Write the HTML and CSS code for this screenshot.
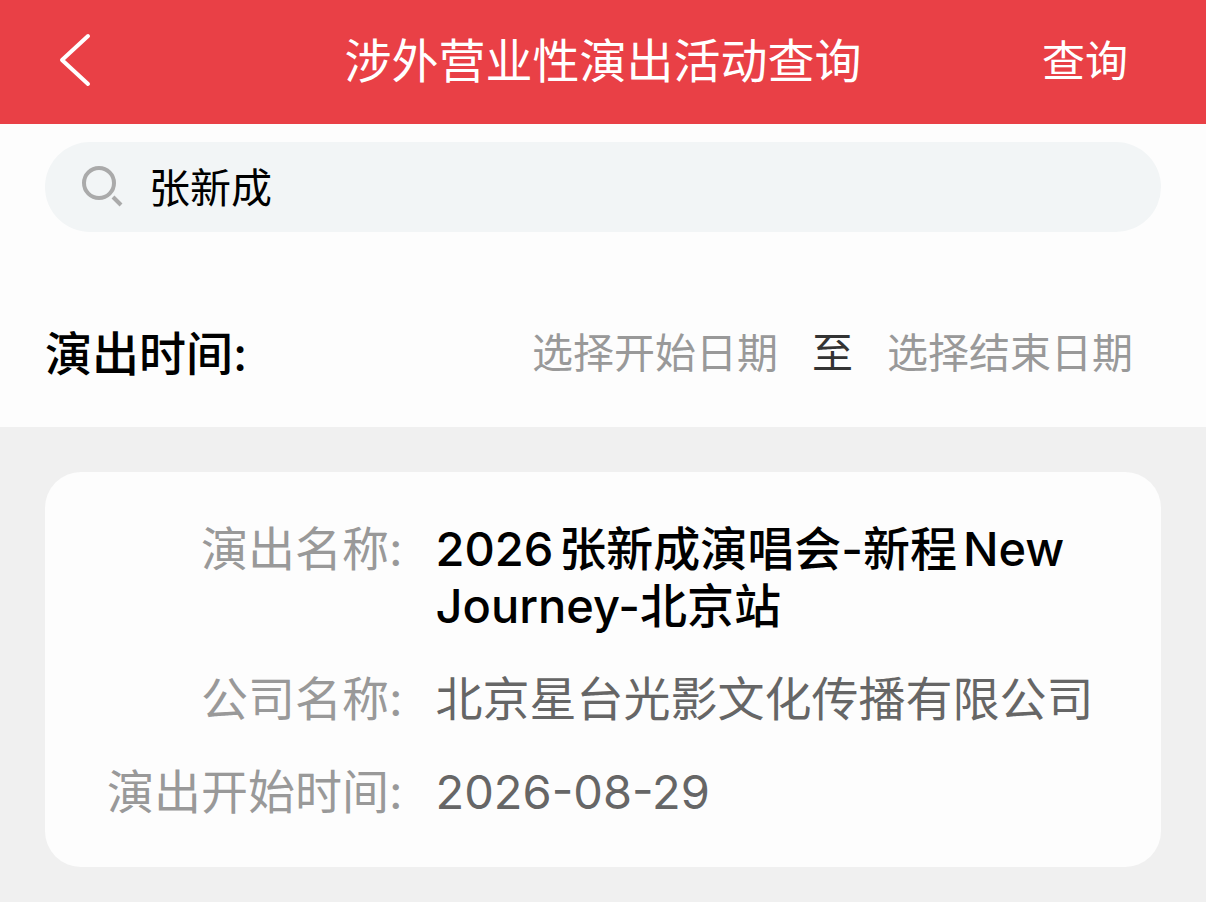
FILE: index.html
```html
<!DOCTYPE html>
<html lang="zh-CN">
<head>
    <meta charset="UTF-8">
    <meta name="viewport" content="width=device-width, initial-scale=1.0">
    <title>涉外营业性演出活动查询</title>
    <link rel="stylesheet" href="styles.css">
</head>
<body>

    <header class="navbar">
        <button type="button" class="back" aria-label="返回">
            <svg width="34" height="56" viewBox="0 0 34 56" fill="none" stroke="#fff" stroke-width="4" stroke-linecap="round" stroke-linejoin="round">
                <path d="M30 4 L4 28 L30 52"/>
            </svg>
        </button>
        <h1>涉外营业性演出活动查询</h1>
        <button type="submit" form="searchForm" class="query">查询</button>
    </header>

    <form class="filters" id="searchForm">
        <label class="search">
            <svg width="42" height="42" viewBox="0 0 42 42" fill="none" stroke="#aaa" stroke-width="4">
                <circle cx="18" cy="17" r="15"/>
                <path d="M32 31 L40 39"/>
            </svg>
            <input type="text" value="张新成" aria-label="搜索">
        </label>

        <div class="date-row" role="group" aria-labelledby="dateTitle">
            <h2 id="dateTitle">演出时间:</h2>
            <div class="dates">
                <button type="button" class="date">选择开始日期</button>
                <span>至</span>
                <button type="button" class="date">选择结束日期</button>
            </div>
        </div>
    </form>

    <main>
        <dl class="card">
            <dt>演出名称:</dt>
            <dd class="name">2026张新成演唱会-新程New Journey-北京站</dd>
            <dt>公司名称:</dt>
            <dd>北京星台光影文化传播有限公司</dd>
            <dt>演出开始时间:</dt>
            <dd>2026-08-29</dd>
        </dl>
    </main>

</body>
</html>
```
FILE: styles.css
```css
* {
    box-sizing: border-box;
}

body {
    margin: 0;
    background-color: #f0f0f0;
    color: #000;
    font-family: Inter, "Noto Sans CJK SC", sans-serif;
    font-size: 47px;
    line-height: 57px;
}

button,
input {
    padding: 0;
    border: none;
    background: none;
    color: inherit;
    font: inherit;
}

h1,
h2 {
    margin: 0;
    font-size: 47px;
}

.navbar {
    display: grid;
    grid-template-columns: 1fr auto 1fr;
    align-items: center;
    height: 124px;
    padding: 0 58px 4px;
    background-color: #e94046;
    color: #fff;
}

.navbar h1 {
    font-weight: 400;
}

.back {
    display: flex;
    justify-self: start;
}

.query {
    justify-self: end;
    padding: 2px 20px 0;
    font-size: 43px;
}

.filters {
    padding: 18px 45px 45px;
    background-color: #fdfdfd;
}

.search {
    display: flex;
    align-items: center;
    gap: 26px;
    height: 90px;
    padding: 0 36px;
    border-radius: 45px;
    background-color: #f2f5f6;
}

.search input {
    flex: 1;
    min-width: 0;
    padding-top: 2px;
    outline: none;
    font-size: 41px;
}

.date-row {
    display: flex;
    justify-content: space-between;
    align-items: center;
    margin-top: 93px;
    padding-right: 28px;
}

.date-row h2 {
    font-weight: 500;
}

.dates {
    display: flex;
    gap: 34px;
    color: #333;
    font-size: 41px;
}

.date {
    color: #999;
}

.card {
    display: grid;
    grid-template-columns: auto 1fr;
    gap: 36px 33px;
    margin: 45px;
    padding: 48px 60px 47px 62px;
    border-radius: 36px;
    background-color: #fdfdfd;
    color: #666;
}

.card dt {
    color: #999;
    text-align: right;
}

.card dd {
    margin: 0;
}

.card .name {
    color: #000;
    font-weight: 500;
    text-autospace: normal;
}
```
